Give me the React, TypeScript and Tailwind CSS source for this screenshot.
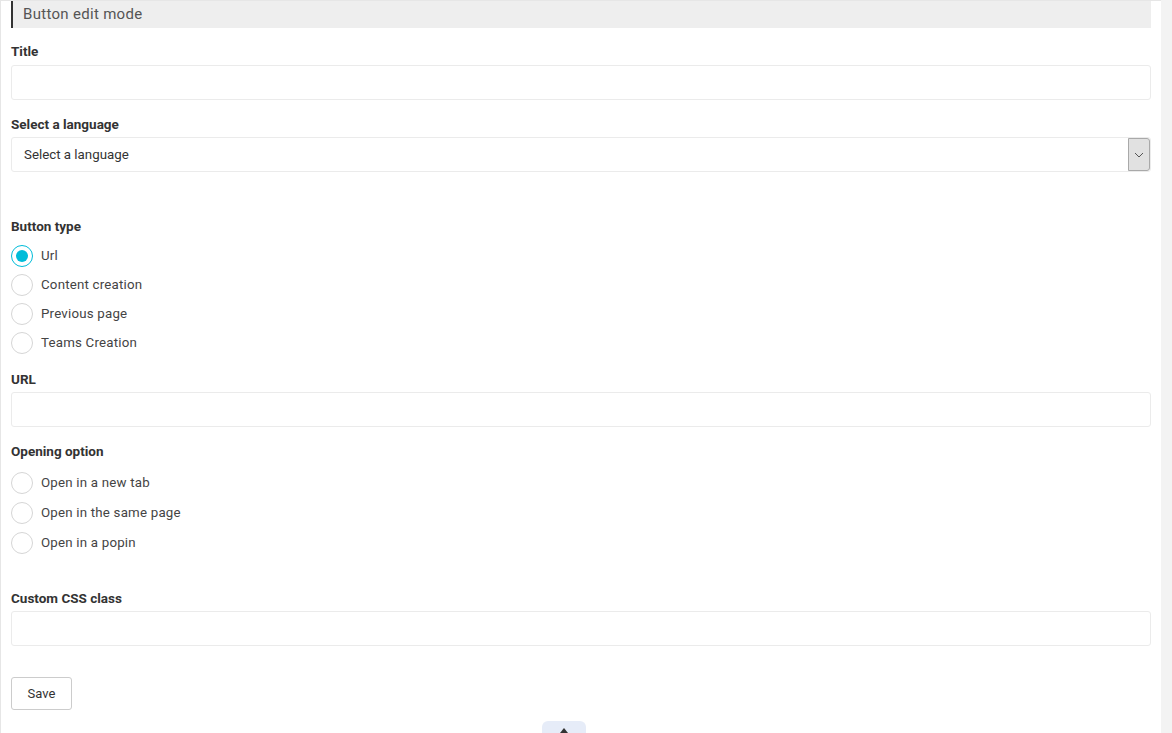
import { useState } from "react";

const font = { fontFamily: "Roboto, 'Liberation Sans', sans-serif" };

const Label = ({ children }: { children: React.ReactNode }) => (
  <div className="h-[14px] text-[13.5px] font-bold text-[#333] leading-[14px]">{children}</div>
);

const TextInput = () => (
  <input
    type="text"
    className="block w-full h-[35px] border border-[#ebebeb] rounded-[3px] bg-white px-3 outline-none"
  />
);

const Radio = ({
  label,
  checked,
  onClick,
}: {
  label: string;
  checked?: boolean;
  onClick?: () => void;
}) => (
  <div className="flex items-center gap-2 h-[22px] cursor-pointer" onClick={onClick}>
    <span
      className={
        checked
          ? "w-[22px] h-[22px] rounded-full border border-[#00bcd9] flex items-center justify-center bg-white"
          : "w-[22px] h-[22px] rounded-full border border-[#d6d6d6] bg-white"
      }
    >
      {checked && <span className="w-[12px] h-[12px] rounded-full bg-[#00bcd9]" />}
    </span>
    <span className="text-[13.3px] text-[#444] tracking-[0.2px]">{label}</span>
  </div>
);

export default function App() {
  const [type, setType] = useState("Url");
  const [opening, setOpening] = useState<string | null>(null);

  return (
    <div className="flex w-[1172px] h-[733px] overflow-hidden bg-white" style={font}>
      <div className="relative flex-1 border-l border-t border-[#e6e6e6] px-[10px]">
        <div className="h-[27px] bg-[#eeeeee] border-l-2 border-[#333] flex items-center pl-[10px]">
          <span className="text-[15px] text-[#555] tracking-[0.3px]">Button edit mode</span>
        </div>

        <div className="mt-[16px]">
          <Label>Title</Label>
          <div className="mt-[7px]">
            <TextInput />
          </div>
        </div>

        <div className="mt-[17px]">
          <Label>Select a language</Label>
          <div className="mt-[6px] flex h-[35px] border border-[#ebebeb] rounded-[3px]">
            <div className="flex-1 flex items-center pl-3 text-[13.3px] text-[#333]">
              Select a language
            </div>
            <div className="w-[22px] bg-[#e1e1e1] border border-[#a9a9a9] rounded-r-[3px] flex items-center justify-center">
              <svg width="10" height="6" viewBox="0 0 10 6" fill="none" stroke="#555" strokeWidth="1">
                <path d="M1 1l4 4 4-4" />
              </svg>
            </div>
          </div>
        </div>

        <div className="mt-[47px]">
          <Label>Button type</Label>
          <div className="mt-[12px] flex flex-col gap-[7px]">
            {["Url", "Content creation", "Previous page", "Teams Creation"].map((t) => (
              <Radio key={t} label={t} checked={type === t} onClick={() => setType(t)} />
            ))}
          </div>
        </div>

        <div className="mt-[18px]">
          <Label>URL</Label>
          <div className="mt-[6px]">
            <TextInput />
          </div>
        </div>

        <div className="mt-[17px]">
          <Label>Opening option</Label>
          <div className="mt-[14px] flex flex-col gap-[8px]">
            {["Open in a new tab", "Open in the same page", "Open in a popin"].map((t) => (
              <Radio key={t} label={t} checked={opening === t} onClick={() => setOpening(t)} />
            ))}
          </div>
        </div>

        <div className="mt-[37px]">
          <Label>Custom CSS class</Label>
          <div className="mt-[6px]">
            <TextInput />
          </div>
        </div>

        <button className="block mt-[31px] w-[61px] h-[33px] border border-[#cccccc] rounded-[3px] bg-white text-[13px] text-[#333]">
          Save
        </button>

        <div className="absolute left-[541px] top-[720px] w-[44px] h-[20px] bg-[#e6ecf8] rounded-t-[6px] flex justify-center pt-[7px]">
          <svg width="8" height="5" viewBox="0 0 8 5" fill="#333">
            <path d="M4 0l4 5H0z" />
          </svg>
        </div>
      </div>
      <div className="w-[11px] bg-[#f3f3f3]" />
    </div>
  );
}
